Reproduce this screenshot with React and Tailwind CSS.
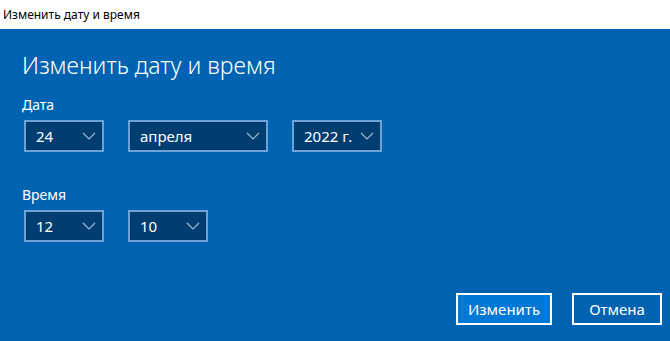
import React from 'react';

const FONT = { fontFamily: "'Segoe UI', 'Noto Sans', 'Open Sans', sans-serif" };

function Chevron() {
  return (
    <svg width="14" height="8" viewBox="0 0 14 8" fill="none" className="shrink-0">
      <path d="M1 1 L7 7 L13 1" stroke="#9dbbd9" strokeWidth="1.2" />
    </svg>
  );
}

function Select({ value, width }) {
  return (
    <div
      className={`h-[32px] border-2 border-[#6ea3d8] bg-[#003e71] flex items-center justify-between pl-[10px] pr-[6px] text-white text-[15px] ${width}`}
    >
      <span>{value}</span>
      <Chevron />
    </div>
  );
}

export default function App() {
  return (
    <div className="w-[670px] h-[341px] flex flex-col overflow-hidden" style={FONT}>
      {/* Title bar */}
      <div className="h-[29px] bg-white flex items-center pl-[3px] text-[12px] text-black">
        Изменить дату и время
      </div>

      <div className="flex-1 bg-[#0063b1] flex flex-col px-[22px]">
        <h1 className="mt-[21px] text-[23px] font-light text-white leading-[30px]">
          Изменить дату и время
        </h1>

        <p className="mt-[15px] text-[14px] text-white leading-[20px]">Дата</p>
        <div className="mt-[5px] ml-[2px] flex gap-[24px]">
          <Select value="24" width="w-[80px]" />
          <Select value="апреля" width="w-[140px]" />
          <Select value="2022 г." width="w-[90px]" />
        </div>

        <p className="mt-[33px] text-[14px] text-white leading-[20px]">Время</p>
        <div className="mt-[5px] ml-[2px] flex gap-[24px]">
          <Select value="12" width="w-[80px]" />
          <Select value="10" width="w-[80px]" />
        </div>

        <div className="mt-auto mb-[16px] mr-[-14px] flex justify-end gap-[20px]">
          <button className="w-[96px] h-[32px] border-2 border-white bg-[#0078d7] text-white text-[15px]">
            Изменить
          </button>
          <button className="w-[90px] h-[32px] border-2 border-white bg-[#0063b1] text-white text-[15px]">
            Отмена
          </button>
        </div>
      </div>
    </div>
  );
}
